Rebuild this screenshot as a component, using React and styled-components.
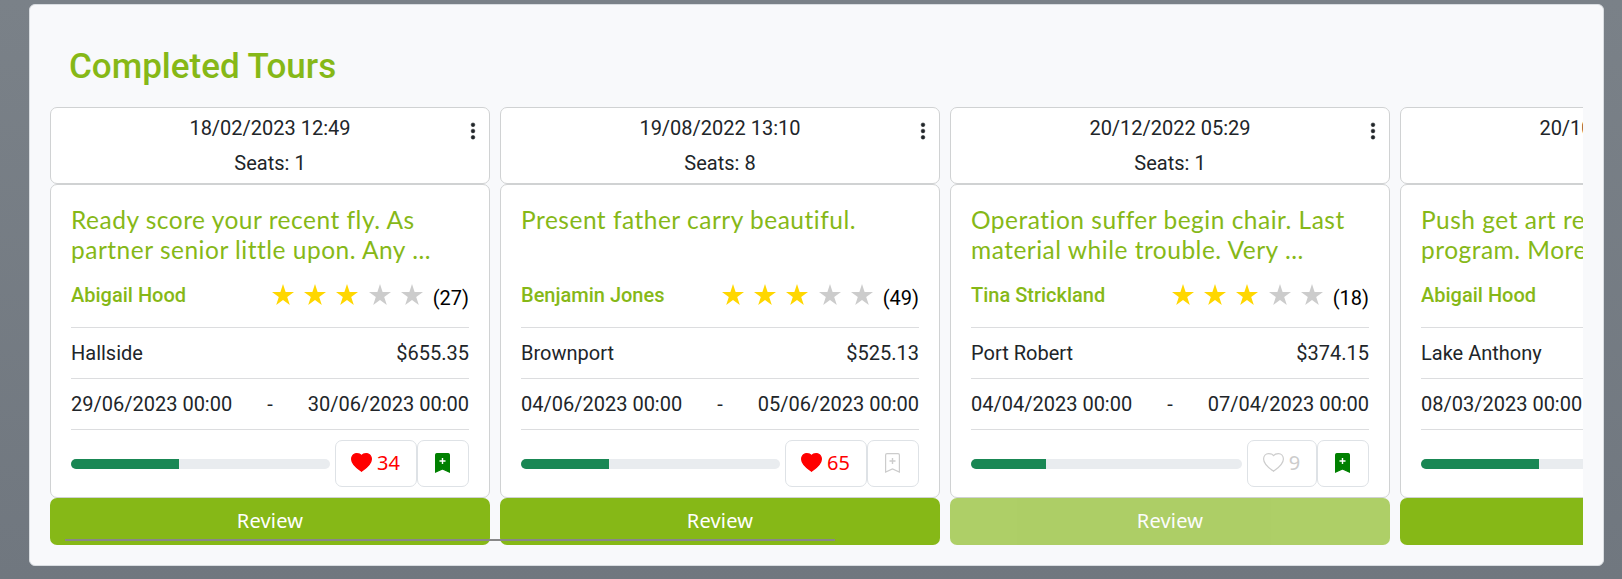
import React from "react";
import styled, { createGlobalStyle } from "styled-components";
import { BsThreeDotsVertical } from "react-icons/bs";

const GlobalStyle = createGlobalStyle`
  *, *::before, *::after { box-sizing: border-box; }
  body {
    margin: 0;
    height: 579px;
    overflow: hidden;
    color: #212529;
    background: linear-gradient(#7a8188, #70777f);
    font-family: Roboto, sans-serif;
    font-size: 20px;
    line-height: 30px;
  }
`;

const Panel = styled.section`
  width: 1575px;
  height: 562px;
  margin: 4px 0 0 29px;
  padding: 0 20px;
  background: #f8f9fb;
  border: 1px solid #d9dde1;
  border-radius: 6px;
`;

const Title = styled.h1`
  margin: 0;
  padding: 41px 0 19px 19px;
  font-size: 35px;
  font-weight: 500;
  line-height: 42px;
  color: #86b817;
`;

const Scroller = styled.div`
  position: relative;
  display: flex;
  gap: 10px;
  overflow: hidden;
`;

const ScrollThumb = styled.div`
  position: absolute;
  left: 15px;
  bottom: 4px;
  width: 770px;
  height: 2px;
  background: #888;
`;

const Tour = styled.article`
  flex: 0 0 440px;
  display: flex;
  flex-direction: column;
`;

const Head = styled.header`
  position: relative;
  display: flex;
  flex-direction: column;
  align-items: center;
  gap: 5px;
  height: 77px;
  padding-top: 5px;
  background: #fff;
  border: 1px solid #d0d2d3;
  border-radius: 7px;
`;

const MenuButton = styled.button`
  position: absolute;
  top: 13px;
  right: 6px;
  display: flex;
  padding: 0;
  border: 0;
  background: none;
  color: #212529;
  font-size: 20px;
  svg { stroke: currentColor; stroke-width: 0.4; }
`;

const Body = styled.div`
  display: flex;
  flex-direction: column;
  height: 314px;
  padding: 20px 20px 0;
  background: #fff;
  border: 1px solid #d0d2d3;
  border-radius: 7px;
`;

const Name = styled.h2`
  margin: 0;
  height: 60px;
  font-family: Lato, sans-serif;
  font-size: 24.5px;
  font-weight: 400;
  line-height: 30px;
  letter-spacing: 0.5px;
  white-space: pre;
  color: #86b817;
`;

const GuideRow = styled.div`
  display: flex;
  align-items: center;
  height: 63px;
  padding-bottom: 3px;
  border-bottom: 1px solid #dcdddf;
`;

const Guide = styled.span`
  flex: 1;
  font-weight: 500;
  color: #86b817;
`;

const Stars = styled.span`
  display: flex;
  gap: 10.4px;
  margin: 0 9.5px 0 0;
`;

const Votes = styled.span`
  margin-top: 6px;
  color: #000;
`;

const InfoRow = styled.div`
  display: flex;
  justify-content: space-between;
  align-items: center;
  height: 51px;
  border-bottom: 1px solid #dcdddf;
`;

const Actions = styled.div`
  display: flex;
  align-items: center;
  padding-top: 10px;
`;

const Track = styled.div`
  flex: 1;
  height: 10px;
  margin-right: 5px;
  overflow: hidden;
  background: #e9ecef;
  border-radius: 5px;
`;

const Fill = styled.div`
  height: 100%;
  background: #198754;
`;

const ActionButton = styled.button`
  display: flex;
  align-items: center;
  justify-content: center;
  gap: 5px;
  width: ${(p) => p.$width}px;
  height: 47px;
  padding: 0 1px 2px 0;
  background: #fff;
  border: 1px solid #dee2e6;
  border-radius: 7px;
  color: ${(p) => p.$color};
  font-family: "Noto Sans", sans-serif;
  font-size: 20px;
  line-height: 30px;
  svg { display: block; }
`;

const Review = styled.button`
  height: 47px;
  padding: 0 0 3px;
  border: 0;
  border-radius: 7px;
  background: #86b817;
  color: #fff;
  font-family: "Noto Sans", sans-serif;
  font-size: 20px;
  letter-spacing: 0.2px;
  opacity: ${(p) => (p.disabled ? 0.65 : 1)};
`;

const Star = ({ on }) => (
  <svg width="22" height="21" viewBox="0 0 22 21" fill={on ? "gold" : "#ccc"}>
    <path d="M11 0l2.6 8H22l-6.8 4.9 2.6 8.1L11 16l-6.8 5 2.6-8.1L0 8h8.4z" />
  </svg>
);

const Heart = ({ on }) => (
  <svg width="21" height="19" viewBox="0 0 21 19" fill={on ? "currentColor" : "none"} stroke="currentColor" strokeWidth="1.2">
    <path d="M10.5 18.3C7.5 16 .6 11.8.6 6 .6 2.8 2.8.6 5.6.6c2.2 0 3.9.7 4.9 2C11.5 1.3 13.2.6 15.4.6c2.8 0 5 2.2 5 5.4 0 5.800-6.900 10-9.900 12.300z" />
  </svg>
);

const Bookmark = ({ on }) => (
  <svg width="15" height="20" viewBox="0 0 15 20" fill={on ? "currentColor" : "none"} stroke="currentColor" strokeWidth="1.2">
    <path d="M.6 19V2Q.6.6 2 .6h11q1.4 0 1.4 1.4v17L7.5 16z" />
    <path d="M7.5 5v6M4.5 8h6" stroke={on ? "#fff" : "currentColor"} strokeWidth="1.4" />
  </svg>
);

const tours = [
  { booked: "18/02/2023 12:49", seats: 1, name: "Ready score your recent fly. As\npartner senior little upon. Any ...", guide: "Abigail Hood", votes: 27, place: "Hallside", price: "$655.35", from: "29/06/2023 00:00", to: "30/06/2023 00:00", fill: 41.7, likes: 34, liked: true, saved: true },
  { booked: "19/08/2022 13:10", seats: 8, name: "Present father carry beautiful.", guide: "Benjamin Jones", votes: 49, place: "Brownport", price: "$525.13", from: "04/06/2023 00:00", to: "05/06/2023 00:00", fill: 34, likes: 65, liked: true, saved: false },
  { booked: "20/12/2022 05:29", seats: 1, name: "Operation suffer begin chair. Last\nmaterial while trouble. Very ...", guide: "Tina Strickland", votes: 18, place: "Port Robert", price: "$374.15", from: "04/04/2023 00:00", to: "07/04/2023 00:00", fill: 27.7, likes: 9, liked: false, saved: true, reviewed: true },
  { booked: "20/10/2022 08:15", seats: 2, name: "Push get art return\nprogram. More ...", guide: "Abigail Hood", votes: 31, place: "Lake Anthony", price: "$410.20", from: "08/03/2023 00:00", to: "10/03/2023 00:00", fill: 45.6, likes: 21, liked: true, saved: false },
];

function TourCard({ tour }) {
  return (
    <Tour>
      <Head>
        <span>{tour.booked}</span>
        <span>Seats: {tour.seats}</span>
        <MenuButton aria-label="Options"><BsThreeDotsVertical /></MenuButton>
      </Head>
      <Body>
        <Name>{tour.name}</Name>
        <GuideRow>
          <Guide>{tour.guide}</Guide>
          <Stars>{[1, 2, 3, 4, 5].map((n) => <Star key={n} on={n <= 3} />)}</Stars>
          <Votes>({tour.votes})</Votes>
        </GuideRow>
        <InfoRow><span>{tour.place}</span><span>{tour.price}</span></InfoRow>
        <InfoRow><span>{tour.from}</span><span>-</span><span>{tour.to}</span></InfoRow>
        <Actions>
          <Track><Fill style={{ width: `${tour.fill}%` }} /></Track>
          <ActionButton $width={tour.likes > 9 ? 82 : 70} $color={tour.liked ? "red" : "#ccc"}>
            <Heart on={tour.liked} />{tour.likes}
          </ActionButton>
          <ActionButton $width={52} $color={tour.saved ? "green" : "#ccc"} aria-label="Save">
            <Bookmark on={tour.saved} />
          </ActionButton>
        </Actions>
      </Body>
      <Review disabled={tour.reviewed}>Review</Review>
    </Tour>
  );
}

export default function App() {
  return (
    <>
      <GlobalStyle />
      <Panel>
        <Title>Completed Tours</Title>
        <Scroller>
          {tours.map((tour) => <TourCard key={tour.booked} tour={tour} />)}
          <ScrollThumb />
        </Scroller>
      </Panel>
    </>
  );
}
